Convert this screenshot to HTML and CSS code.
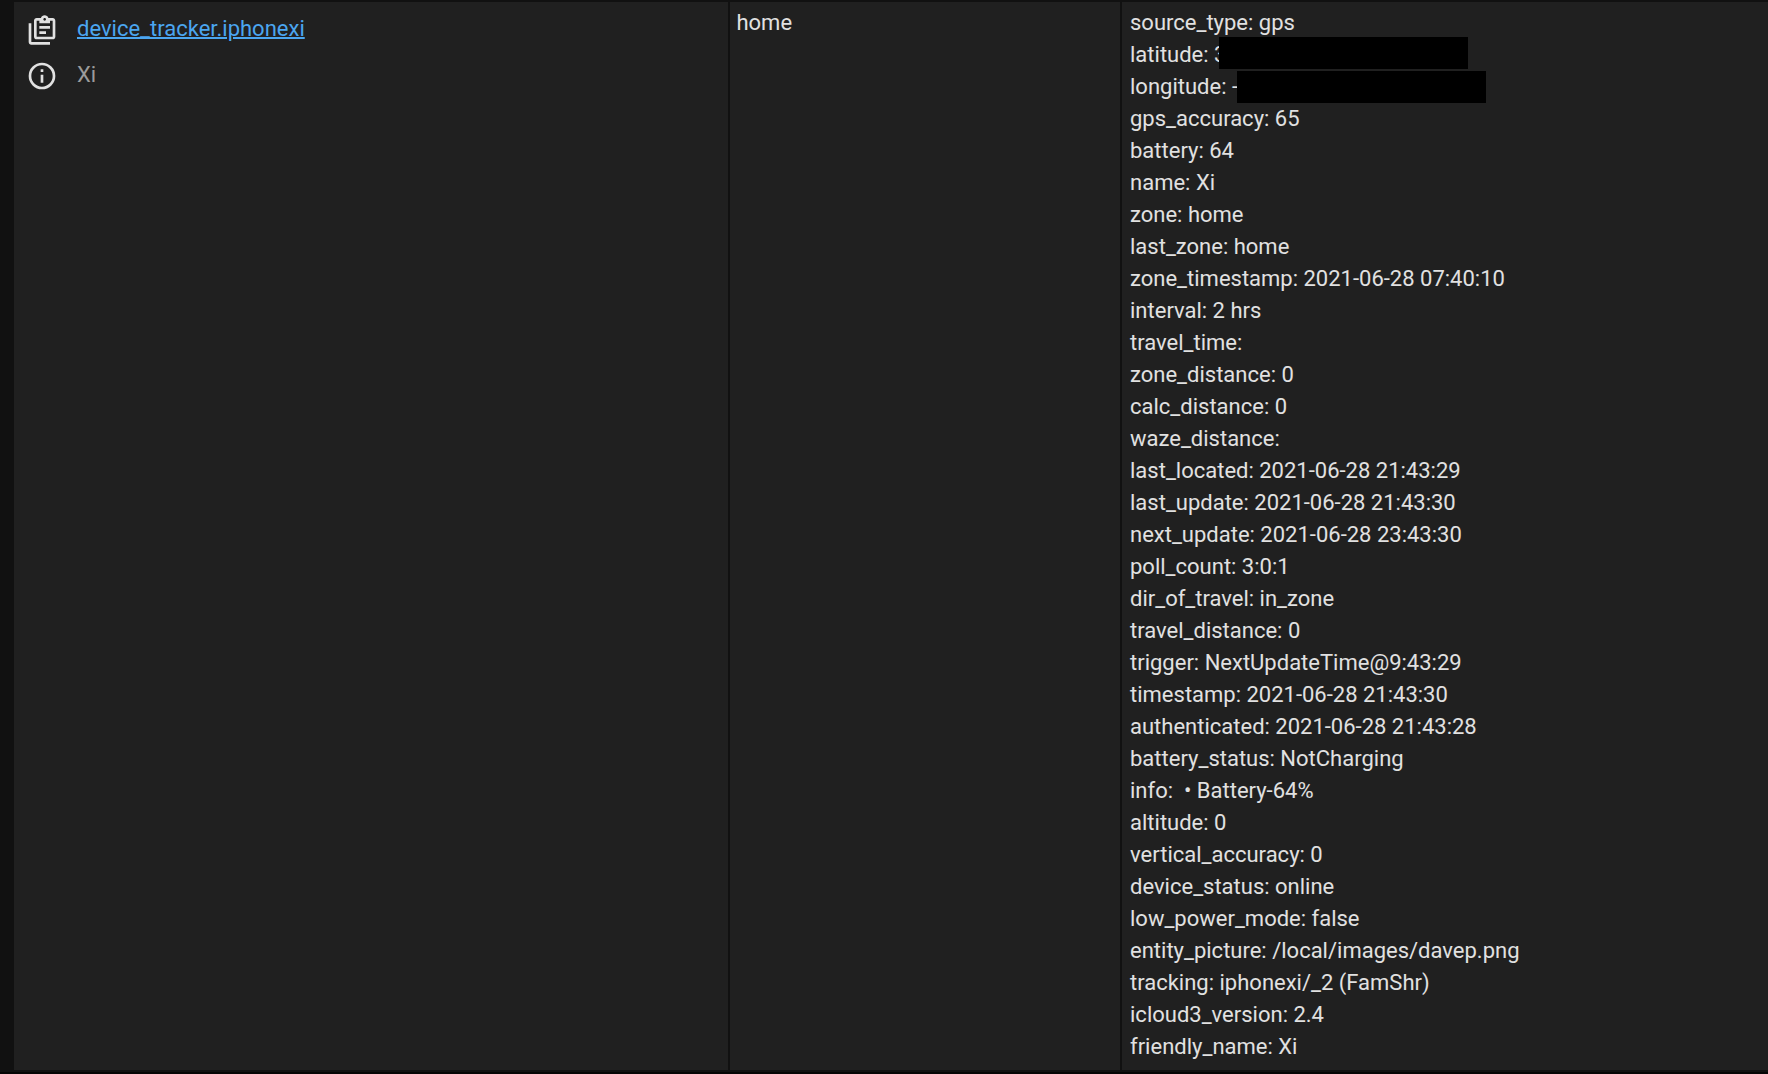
FILE: index.html
```html
<!DOCTYPE html>
<html lang="en">
<head>
<meta charset="utf-8">
<title>States</title>
<link rel="stylesheet" href="styles.css">
</head>
<body>
<table class="states">
<colgroup><col class="col-entity"><col class="col-state"><col></colgroup>
<tbody>
<tr>
<td>
<div class="entity">
<div class="entity-row">
<button class="icon-button" type="button" aria-label="Copy entity ID"><svg class="icon" viewBox="0 0 24 24"><path d="M4 7V21H18V23H4C2.9 23 2 22.1 2 21V7H4M20 3C21.1 3 22 3.9 22 5V17C22 18.1 21.1 19 20 19H8C6.9 19 6 18.1 6 17V5C6 3.9 6.9 3 8 3H11.18C11.6 1.84 12.7 1 14 1C15.3 1 16.4 1.84 16.82 3H20M14 3C13.45 3 13 3.45 13 4S13.45 5 14 5 15 4.55 15 4 14.55 3 14 3M10 7V5H8V17H20V5H18V7H10M15 15H10V13H15V15M18 11H10V9H18V11Z"/></svg></button>
<a class="entity-link" href="#">device_tracker.iphonexi</a>
</div>
<div class="entity-row">
<button class="icon-button" type="button" aria-label="More info"><svg class="icon" viewBox="0 0 24 24"><path d="M11 9H13V7H11M12 20C7.59 20 4 16.41 4 12C4 7.59 7.59 4 12 4C16.41 4 20 7.59 20 12C20 16.41 16.41 20 12 20M12 2A10 10 0 0 0 2 12A10 10 0 0 0 12 22A10 10 0 0 0 22 12A10 10 0 0 0 12 2M11 17H13V11H11V17Z"/></svg></button>
<span class="friendly">Xi</span>
</div>
</div>
</td>
<td>home</td>
<td>
<ul class="attributes">
<li>source_type: gps</li>
<li>latitude: <span class="redacted redacted-lat">3</span></li>
<li>longitude: <span class="redacted redacted-lon">-</span></li>
<li>gps_accuracy: 65</li>
<li>battery: 64</li>
<li>name: Xi</li>
<li>zone: home</li>
<li>last_zone: home</li>
<li>zone_timestamp: 2021-06-28 07:40:10</li>
<li>interval: 2 hrs</li>
<li>travel_time:</li>
<li>zone_distance: 0</li>
<li>calc_distance: 0</li>
<li>waze_distance:</li>
<li>last_located: 2021-06-28 21:43:29</li>
<li>last_update: 2021-06-28 21:43:30</li>
<li>next_update: 2021-06-28 23:43:30</li>
<li>poll_count: 3:0:1</li>
<li>dir_of_travel: in_zone</li>
<li>travel_distance: 0</li>
<li>trigger: NextUpdateTime@9:43:29</li>
<li>timestamp: 2021-06-28 21:43:30</li>
<li>authenticated: 2021-06-28 21:43:28</li>
<li>battery_status: NotCharging</li>
<li>info: &nbsp;• Battery-64%</li>
<li>altitude: 0</li>
<li>vertical_accuracy: 0</li>
<li>device_status: online</li>
<li>low_power_mode: false</li>
<li>entity_picture: /local/images/davep.png</li>
<li>tracking: iphonexi/_2 (FamShr)</li>
<li>icloud3_version: 2.4</li>
<li>friendly_name: Xi</li>
</ul>
</td>
</tr>
</tbody>
</table>
</body>
</html>
```
FILE: styles.css
```css
html { background: #050505; }

body {
  margin: 0;
  padding-left: 12px;
  background: #111;
  color: #e1e1e1;
  font: 22px/32px Roboto, sans-serif;
}

.states {
  width: 100%;
  table-layout: fixed;
  border-collapse: separate;
  border-spacing: 0;
}

.states td {
  padding: 5px 6px 7px;
  border: solid #111;
  border-width: 2px 0 2px 2px;
  background: #202020;
  vertical-align: top;
}

.col-entity { width: 40.8%; }
.col-state { width: 22.3%; }

.entity {
  display: flex;
  flex-direction: column;
  gap: 14px;
  padding: 7px 6px;
}

.entity-row {
  display: flex;
  align-items: flex-start;
  gap: 19px;
  line-height: 30px;
}

.icon-button {
  display: block;
  padding: 0;
  border: 0;
  background: none;
  color: #e1e1e1;
}

.icon {
  display: block;
  width: 32px;
  height: 32px;
  fill: currentColor;
}

.entity-link {
  color: #4ba6f0;
  text-decoration-thickness: 2px;
}

.friendly { color: #9b9b9b; }

.attributes {
  margin: 0;
  padding: 0 0 0 2px;
  list-style: none;
}

.redacted { position: relative; }

.redacted::after {
  content: "";
  position: absolute;
  width: 249px;
  height: 32px;
  background: #000;
}

.redacted-lat::after {
  top: -5px;
  left: 5px;
}

.redacted-lon::after {
  top: -3px;
  left: 5px;
}
```
